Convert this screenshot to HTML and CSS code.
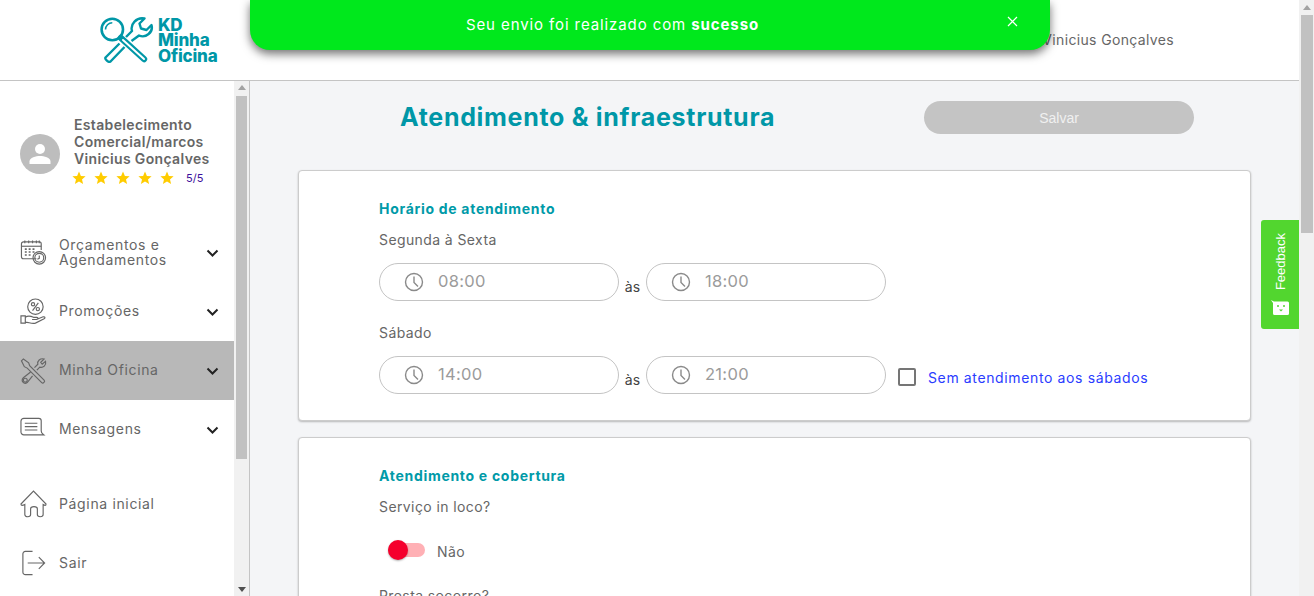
FILE: index.html
```html
<!DOCTYPE html>
<html lang="pt-BR">
<head>
    <meta charset="UTF-8">
    <meta name="viewport" content="width=device-width, initial-scale=1.0">
    <title>KD Minha Oficina</title>
    <link rel="stylesheet" href="styles.css">
</head>
<body>
    <svg class="defs" width="0" height="0">
        <defs>
            <polygon id="star" points="7,0.5 8.9,4.9 13.6,5.3 10,8.4 11.1,13 7,10.6 2.9,13 4,8.4 0.4,5.3 5.1,4.9"/>
            <g id="clock">
                <circle cx="10" cy="10" r="8.5"/>
                <path d="M10 4.5V10.5L14 14.5"/>
            </g>
            <path id="chevron" d="M1.5 1.5L6.5 6.5L11.5 1.5"/>
        </defs>
    </svg>

    <div class="screen">
        <div class="page">
            <header class="topbar">
                <div class="logo">
                    <svg class="logo-icon" width="54" height="46" viewBox="0 0 54 46">
                        <circle cx="12.3" cy="12.5" r="10.7" fill="none" stroke="#0097a7" stroke-width="2.6"/>
                        <path d="M5.5 12.5A6.8 6.8 0 0 1 12.3 5.7" fill="none" stroke="#0097a7" stroke-width="1.6"/>
                        <path d="M19.5 26.5L5.5 40.5C4.5 42 8.5 46 10.5 44.5L24.5 30" fill="none" stroke="#0097a7" stroke-width="2.4" stroke-linejoin="round"/>
                        <path d="M26 20L32 14C30 7 36.5 0 44.5 1.5L39.5 6.5L41 11.5L46.5 13L51.5 8C53.5 15 46 21.5 39 18.5L31.5 24" fill="none" stroke="#0097a7" stroke-width="2.4" stroke-linejoin="round"/>
                        <path d="M21 21L44 42" stroke="#0097a7" stroke-width="6.4" stroke-linecap="round"/>
                        <path d="M23 23L44 42" stroke="#fff" stroke-width="2" stroke-linecap="round"/>
                    </svg>
                    <div class="logo-text">KD<br>Minha<br>Oficina</div>
                </div>
                <div class="topbar-user">Estabelecimento Comercial/marcos Vinicius Gonçalves</div>
            </header>

            <div class="layout">
                <aside class="sidebar">
                    <div class="sidebar-body">
                        <div class="profile">
                            <div class="avatar">
                                <svg width="24" height="24" viewBox="0 0 24 24" fill="#fff">
                                    <circle cx="12" cy="7" r="5"/>
                                    <path d="M1.5 22V19.5C1.5 15.5 8 14 12 14S22.5 15.5 22.5 19.5V22Z"/>
                                </svg>
                            </div>
                            <div class="profile-info">
                                <div class="profile-name">Estabelecimento Comercial/marcos Vinicius Gonçalves</div>
                                <div class="rating">
                                    <svg class="star" width="14" height="14" viewBox="0 0 14 14"><use href="#star"/></svg>
                                    <svg class="star" width="14" height="14" viewBox="0 0 14 14"><use href="#star"/></svg>
                                    <svg class="star" width="14" height="14" viewBox="0 0 14 14"><use href="#star"/></svg>
                                    <svg class="star" width="14" height="14" viewBox="0 0 14 14"><use href="#star"/></svg>
                                    <svg class="star" width="14" height="14" viewBox="0 0 14 14"><use href="#star"/></svg>
                                    <span class="rating-value">5/5</span>
                                </div>
                            </div>
                        </div>

                        <nav class="menu">
                            <a class="menu-item">
                                <svg class="menu-icon" width="28" height="28" viewBox="0 0 28 28">
                                    <path d="M17 20H3.5A2 2 0 0 1 1.5 18V4.5A2 2 0 0 1 3.5 2.5H20A2 2 0 0 1 22 4.5V11"/>
                                    <path d="M1.5 7H22"/>
                                    <path d="M5 1V4M9 1V4M13 1V4M17 1V4M20 1V4"/>
                                    <path d="M5 10H7M9 10H11M13 10H15M5 13H7M9 13H11M13 13H15M5 16H7M9 16H11" stroke-width="1.6"/>
                                    <circle cx="20" cy="19" r="6.5"/>
                                    <circle cx="20" cy="19" r="4.6"/>
                                    <path d="M20 16.5V19.5L18 20.5"/>
                                </svg>
                                <span class="menu-label">Orçamentos e Agendamentos</span>
                                <svg class="chevron" width="13" height="8" viewBox="0 0 13 8"><use href="#chevron"/></svg>
                            </a>
                            <a class="menu-item">
                                <svg class="menu-icon" width="28" height="28" viewBox="0 0 28 28">
                                    <circle cx="16" cy="8.5" r="8"/>
                                    <circle cx="13.5" cy="6" r="1.7"/>
                                    <circle cx="18.5" cy="11" r="1.7"/>
                                    <path d="M19 4.5L13 12.5"/>
                                    <path d="M1 18H5.5V25.5H1ZM5.5 19.5C8 17.5 11 18 14 19.5H17.5C19 19.5 19 21.8 17 21.8H12.5M17 21.8L24 19C26 18.5 26.5 20 25 21L16 25.5C12 26.5 9 24.5 5.5 24.5"/>
                                </svg>
                                <span class="menu-label">Promoções</span>
                                <svg class="chevron" width="13" height="8" viewBox="0 0 13 8"><use href="#chevron"/></svg>
                            </a>
                            <a class="menu-item is-active">
                                <svg class="menu-icon" width="28" height="28" viewBox="0 0 28 28">
                                    <path d="M1.5 3.5L3.5 1.5L9 5.5L10 8.5L25 23.5C26.5 25 24 27.5 22.5 26L7.5 11L4.5 9.5Z"/>
                                    <path d="M15 10.5L18.5 7C17.5 3.5 21 0.5 25 1.5L21.5 5L23 7L26.5 4C27.5 8 24 11 20.5 10L17.5 13"/>
                                    <path d="M11 15L3.5 21C0.5 24 4 28.5 7.5 26L13 19"/>
                                    <circle cx="5.5" cy="23.5" r="2"/>
                                </svg>
                                <span class="menu-label">Minha Oficina</span>
                                <svg class="chevron" width="13" height="8" viewBox="0 0 13 8"><use href="#chevron"/></svg>
                            </a>
                            <a class="menu-item">
                                <svg class="menu-icon" width="28" height="28" viewBox="0 0 28 28">
                                    <path d="M4 2H19.5A2.5 2.5 0 0 1 22 4.5V15C22 17 23 18 24.5 19H4A3 3 0 0 1 1 16V5A3 3 0 0 1 4 2Z"/>
                                    <path d="M5 7H18M5 10.5H18M5 14H18"/>
                                </svg>
                                <span class="menu-label">Mensagens</span>
                                <svg class="chevron" width="13" height="8" viewBox="0 0 13 8"><use href="#chevron"/></svg>
                            </a>
                        </nav>

                        <nav class="menu menu-bottom">
                            <a class="menu-item">
                                <svg class="menu-icon" width="28" height="30" viewBox="0 0 28 30">
                                    <path d="M1 15L14 1.5L27 15C27 17 25.5 16.5 24 15.5V26C24 29 18 29 18 26V20C18 17 11 17 11 20V26C11 29 5 29 5 26V15.5C3 16.5 1 17 1 15Z"/>
                                </svg>
                                <span class="menu-label">Página inicial</span>
                            </a>
                            <a class="menu-item">
                                <svg class="menu-icon" width="28" height="28" viewBox="0 0 28 28">
                                    <path d="M13 2H5.5A2.5 2.5 0 0 0 3 4.5V23.5A2.5 2.5 0 0 0 5.5 26H13"/>
                                    <path d="M8 14H25M19.5 8L25.5 14L19.5 20"/>
                                </svg>
                                <span class="menu-label">Sair</span>
                            </a>
                        </nav>
                    </div>
                    <div class="scrollbar side-scroll">
                        <span class="arrow-up"></span>
                        <div class="thumb"></div>
                        <span class="arrow-down"></span>
                    </div>
                </aside>

                <main class="content">
                    <div class="title-row">
                        <h1 class="page-title">Atendimento &amp; infraestrutura</h1>
                        <button class="save-btn">Salvar</button>
                    </div>

                    <section class="card">
                        <h3 class="card-title">Horário de atendimento</h3>
                        <div class="field-label">Segunda à Sexta</div>
                        <div class="time-row">
                            <div class="time-input">
                                <svg class="clock" width="20" height="20" viewBox="0 0 20 20"><use href="#clock"/></svg>
                                <span class="time-value">08:00</span>
                            </div>
                            <span class="time-sep">às</span>
                            <div class="time-input">
                                <svg class="clock" width="20" height="20" viewBox="0 0 20 20"><use href="#clock"/></svg>
                                <span class="time-value">18:00</span>
                            </div>
                        </div>
                        <div class="field-label spaced">Sábado</div>
                        <div class="time-row">
                            <div class="time-input">
                                <svg class="clock" width="20" height="20" viewBox="0 0 20 20"><use href="#clock"/></svg>
                                <span class="time-value">14:00</span>
                            </div>
                            <span class="time-sep">às</span>
                            <div class="time-input">
                                <svg class="clock" width="20" height="20" viewBox="0 0 20 20"><use href="#clock"/></svg>
                                <span class="time-value">21:00</span>
                            </div>
                            <label class="check">
                                <span class="check-box"></span>
                                <span class="check-label">Sem atendimento aos sábados</span>
                            </label>
                        </div>
                    </section>

                    <section class="card">
                        <h3 class="card-title">Atendimento e cobertura</h3>
                        <div class="field-label">Serviço in loco?</div>
                        <div class="toggle-row">
                            <span class="toggle"><span class="toggle-thumb"></span></span>
                            <span class="toggle-label">Não</span>
                        </div>
                        <div class="field-label after-toggle">Presta socorro?</div>
                    </section>
                </main>
            </div>
        </div>

        <div class="scrollbar page-scroll">
            <span class="arrow-up"></span>
            <div class="thumb"></div>
        </div>

        <div class="toast">
            <div class="toast-text">Seu envio foi realizado com <b>sucesso</b></div>
            <div class="toast-close">
                <svg width="11" height="11" viewBox="0 0 11 11"><path d="M1 1L10 10M10 1L1 10"/></svg>
            </div>
        </div>

        <div class="feedback">
            <span class="feedback-text">Feedback</span>
            <svg class="feedback-icon" width="18" height="15" viewBox="0 0 18 15">
                <path d="M0 0L3 1.5H16.5A1.5 1.5 0 0 1 18 3V13.5A1.5 1.5 0 0 1 16.5 15H3.5A1.5 1.5 0 0 1 2 13.5V3Z" fill="#fff"/>
                <circle cx="7" cy="6" r="1" fill="#52d62f"/>
                <circle cx="13" cy="6" r="1" fill="#52d62f"/>
                <path d="M8 9.5H12L10 11.5Z" fill="#52d62f"/>
            </svg>
        </div>
    </div>
</body>
</html>
```

FILE: styles.css
```css
* {
    box-sizing: border-box;
}

body {
    margin: 0;
    font-family: "Inter", "Noto Sans", sans-serif;
    font-size: 14px;
    color: #666;
    background: #fff;
}

.defs {
    position: absolute;
}

.screen {
    position: relative;
    display: flex;
    height: 100vh;
    overflow: hidden;
}

.page {
    flex: 1;
    min-width: 0;
    display: flex;
    flex-direction: column;
}

/* header */
.topbar {
    flex: none;
    height: 81px;
    display: flex;
    align-items: center;
    justify-content: space-between;
    padding: 0 125px 0 100px;
    background: #fff;
    border-bottom: 1px solid #c4c4c4;
}

.logo {
    display: flex;
    align-items: center;
}

.logo-icon {
    display: block;
    margin-right: 4px;
}

.logo-text {
    margin-top: 2px;
    color: #0097a7;
    font-size: 17px;
    font-weight: 800;
    line-height: 15.5px;
    letter-spacing: -0.2px;
}

.topbar-user {
    margin-top: -2px;
    letter-spacing: 0.35px;
    white-space: nowrap;
}

.layout {
    flex: 1;
    min-height: 0;
    display: flex;
}

/* sidebar */
.sidebar {
    flex: none;
    width: 250px;
    display: flex;
    border-right: 1px solid #c4c4c4;
}

.sidebar-body {
    width: 234px;
    background: #fff;
}

.profile {
    display: flex;
    align-items: center;
    height: 142px;
    padding: 0 20px;
}

.avatar {
    flex: none;
    width: 40px;
    height: 40px;
    margin-top: 4px;
    margin-right: 14px;
    border-radius: 50%;
    background: #bdbdbd;
    display: flex;
    align-items: center;
    justify-content: center;
}

.profile-info {
    margin-top: -4px;
}

.profile-name {
    width: 145px;
    font-weight: 600;
    line-height: 17px;
    letter-spacing: 0.35px;
}

.rating {
    display: flex;
    align-items: center;
    margin-top: 4px;
    margin-left: -2px;
}

.star {
    display: block;
    margin-right: 8px;
    fill: #ffcc00;
}

.rating-value {
    margin-left: 4px;
    font-size: 11px;
    color: #3b0f9c;
}

.menu {
    display: flex;
    flex-direction: column;
}

.menu-bottom {
    margin-top: 15px;
}

.menu-item {
    height: 59px;
    display: flex;
    align-items: center;
    padding: 0 15px 0 20px;
    line-height: 15px;
    letter-spacing: 0.65px;
}

.menu-item.is-active {
    background: #b8b8b8;
}

.menu-icon {
    flex: none;
    width: 27px;
    margin-right: 12px;
    fill: none;
    stroke: #666;
    stroke-width: 1.2;
}

.menu-label {
    flex: 1;
    margin-top: -2px;
}

.menu-bottom .menu-label {
    margin-top: 0;
}

.chevron {
    flex: none;
    fill: none;
    stroke: #222;
    stroke-width: 2;
}

/* fake scrollbars */
.scrollbar {
    flex: none;
    display: flex;
    flex-direction: column;
    align-items: center;
    background: #f1f1f1;
}

.side-scroll {
    width: 15px;
    padding-top: 4px;
    padding-bottom: 4px;
}

.page-scroll {
    width: 15px;
    padding-top: 5px;
}

.thumb {
    width: 11px;
    background: #c1c1c1;
}

.side-scroll .thumb {
    height: 363px;
    margin-top: 6px;
}

.page-scroll .thumb {
    width: 12px;
    height: 218px;
    margin-top: 5px;
}

.arrow-up,
.arrow-down {
    width: 0;
    height: 0;
    border-left: 4px solid transparent;
    border-right: 4px solid transparent;
}

.arrow-up {
    border-bottom: 5px solid #a3a3a3;
}

.arrow-down {
    margin-top: auto;
    border-top: 5px solid #505050;
}

/* main column */
.content {
    flex: 1;
    min-width: 0;
    overflow: hidden;
    padding: 20px 48px 0;
    background: #f4f5f7;
}

.title-row {
    display: flex;
    align-items: center;
    height: 33px;
    margin-bottom: 36px;
    padding-left: 102px;
}

.page-title {
    width: 524px;
    margin: -2px 0 0;
    color: #0097a7;
    font-size: 25px;
    font-weight: 700;
    letter-spacing: 0.7px;
    white-space: nowrap;
}

.save-btn {
    width: 270px;
    height: 33px;
    border: 0;
    border-radius: 17px;
    background: #c4c4c4;
    color: #f0f0f0;
    font-family: "Liberation Sans", sans-serif;
    font-size: 14px;
}

.card {
    width: 953px;
    margin-bottom: 16px;
    padding: 29px 80px 26px;
    background: #fff;
    border: 1px solid #ccc;
    border-radius: 4px;
    box-shadow: 0 1px 2px rgba(0, 0, 0, 0.25);
}

.card-title {
    margin: 0;
    color: #009aa8;
    font-size: 14px;
    font-weight: 700;
    line-height: 18px;
    letter-spacing: 0.7px;
}

.field-label {
    margin-top: 13px;
    line-height: 18px;
    letter-spacing: 0.4px;
}

.field-label.spaced {
    margin-top: 23px;
}

.field-label.after-toggle {
    margin-top: 27px;
}

.time-row {
    display: flex;
    margin-top: 14px;
}

.time-input {
    width: 240px;
    height: 38px;
    display: flex;
    align-items: center;
    padding-left: 24px;
    border: 1px solid #c4c4c4;
    border-radius: 19px;
    font-size: 16.5px;
    letter-spacing: 0.3px;
    color: #9b9b9b;
}

.time-value {
    margin-top: -2px;
}

.clock {
    margin-right: 14px;
    fill: none;
    stroke: #8a8a8a;
    stroke-width: 1.4;
}

.time-sep {
    width: 27px;
    align-self: flex-end;
    margin-bottom: 5px;
    text-align: center;
    line-height: 18px;
    color: #444;
}

.check {
    display: flex;
    align-items: center;
    align-self: flex-end;
    margin-bottom: 8px;
    margin-left: 12px;
}

.check-box {
    width: 18px;
    height: 18px;
    margin-right: 12px;
    border: 2px solid #757575;
    border-radius: 2px;
}

.check-label {
    color: #2a3cff;
    letter-spacing: 0.63px;
}

.toggle-row {
    display: flex;
    align-items: center;
    margin-top: 23px;
    padding-left: 9px;
}

.toggle {
    position: relative;
    width: 37px;
    height: 14px;
    border-radius: 7px;
    background: #ffb0b5;
}

.toggle-thumb {
    position: absolute;
    left: 0;
    top: -3px;
    width: 20px;
    height: 20px;
    border-radius: 50%;
    background: #f5002d;
    box-shadow: 0 1px 2px rgba(0, 0, 0, 0.3);
}

.toggle-label {
    margin-top: 4px;
    margin-left: 12px;
    letter-spacing: 0.45px;
}

/* overlays */
.toast {
    position: absolute;
    top: 0;
    left: 250px;
    width: 800px;
    height: 50px;
    display: flex;
    background: #00e81c;
    border-radius: 0 0 20px 20px;
    box-shadow: 0 4px 10px rgba(0, 0, 0, 0.55);
    color: #fff;
    font-size: 15px;
    letter-spacing: 0.9px;
}

.toast-text {
    flex: 1;
    padding-top: 16px;
    line-height: 18px;
    text-align: center;
}

.toast-close {
    width: 75px;
    padding-top: 12px;
    text-align: center;
}

.toast-close svg {
    fill: none;
    stroke: #fff;
    stroke-width: 1.2;
}

.feedback {
    position: absolute;
    top: 220px;
    right: 15px;
    width: 38px;
    height: 109px;
    display: flex;
    flex-direction: column;
    align-items: center;
    padding-top: 13px;
    background: #52d62f;
    border-radius: 3px 0 0 3px;
    color: #fff;
    font-family: "Liberation Sans", sans-serif;
    font-size: 13px;
}

.feedback-text {
    writing-mode: vertical-rl;
    transform: rotate(180deg);
}

.feedback-icon {
    margin-top: 10px;
}
```
